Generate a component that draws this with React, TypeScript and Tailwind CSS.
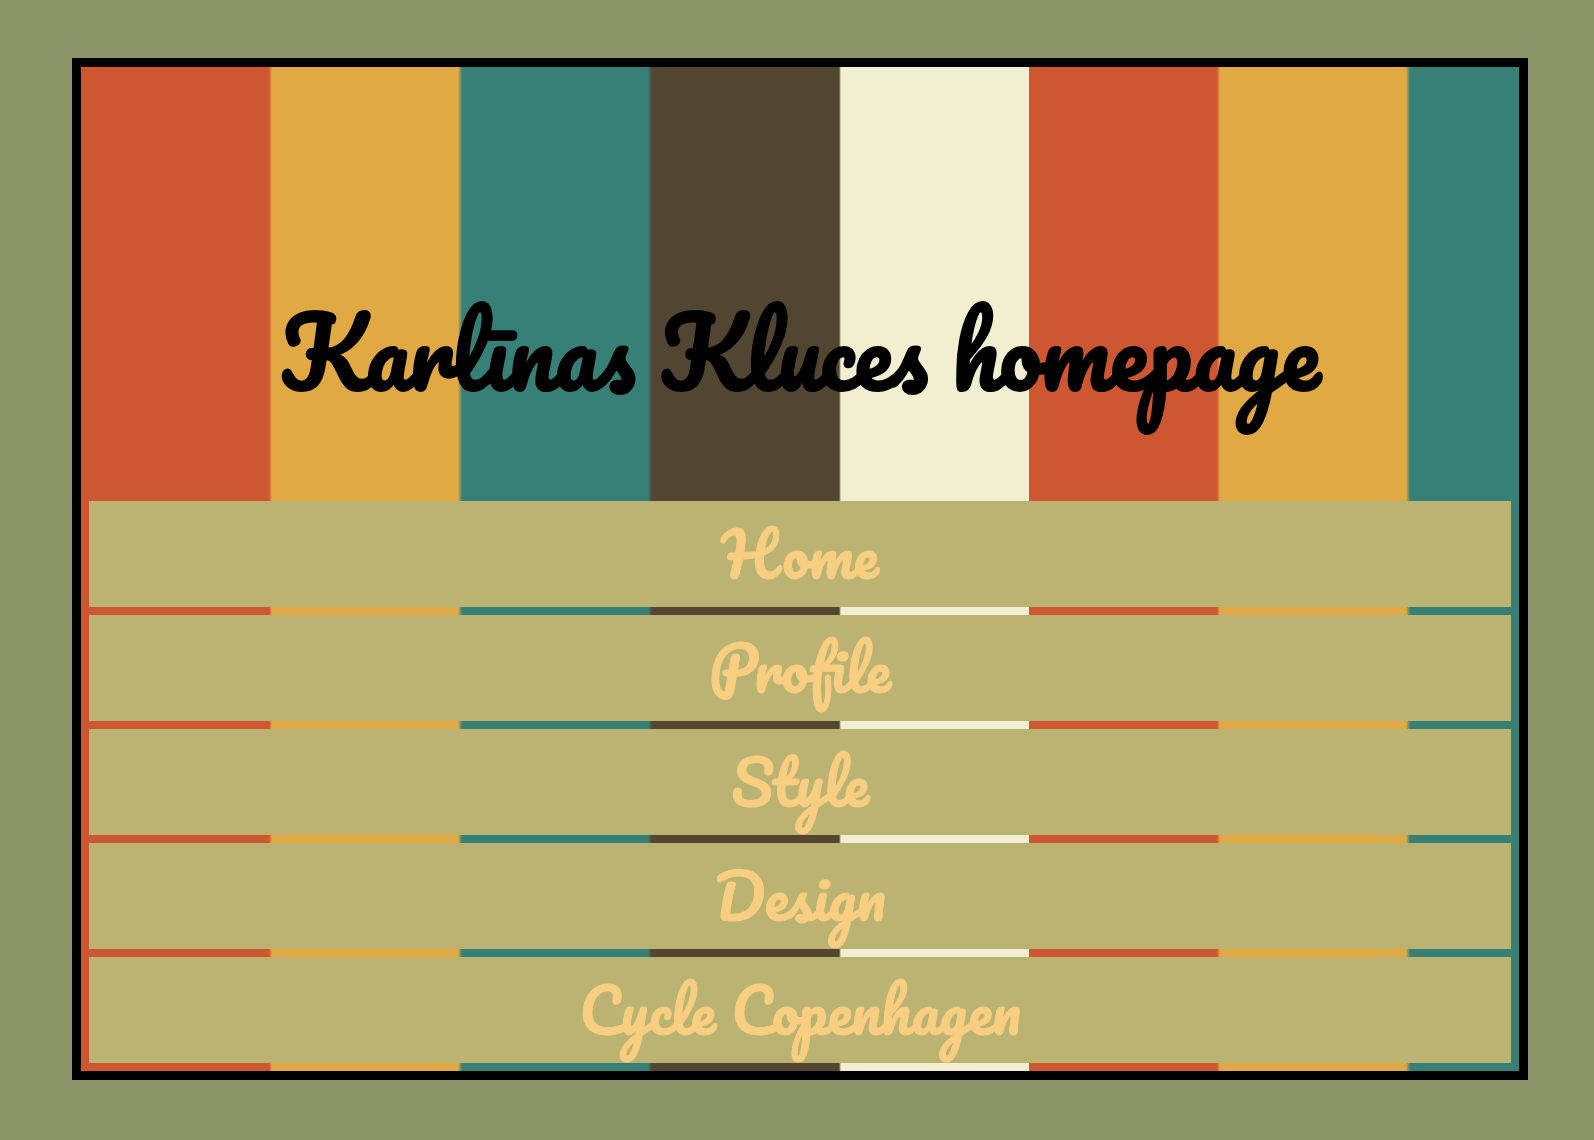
const links = ['Home', 'Profile', 'Style', 'Design', 'Cycle Copenhagen'];

const stripes =
  'bg-[linear-gradient(to_right,#ce5732_0_188px,#e1a943_191px_377px,#378078_381px_567px,#524532_571px_758px,#f2eed0_760px_948px)] bg-[length:948px_100%] bg-repeat-x';

export default function App() {
  return (
    <div className="min-h-screen bg-[#8d9669] pt-[58px] pr-[66px] pb-[60px] pl-[72px] font-['Pacifico','Lato',sans-serif]">
      <div className={`border-[9px] border-black bg-origin-padding ${stripes}`}>
        <header className="px-2 pt-[213px] pb-[77px]">
          <h1 className="text-center text-[93px] leading-[144px] font-normal text-black [-webkit-text-stroke:2px_#000]">
            Karlīnas Kluces homepage
          </h1>
        </header>
        <nav aria-label="Main" className="px-2 pb-2">
          <ul className="flex flex-col gap-2">
            {links.map((label) => (
              <li key={label}>
                <a
                  href="#"
                  className="block bg-[#bab371] text-center text-[60px] leading-[106px] text-[#f8ce80] [-webkit-text-stroke:1px_#f8ce80]"
                >
                  {label}
                </a>
              </li>
            ))}
          </ul>
        </nav>
      </div>
    </div>
  );
}
